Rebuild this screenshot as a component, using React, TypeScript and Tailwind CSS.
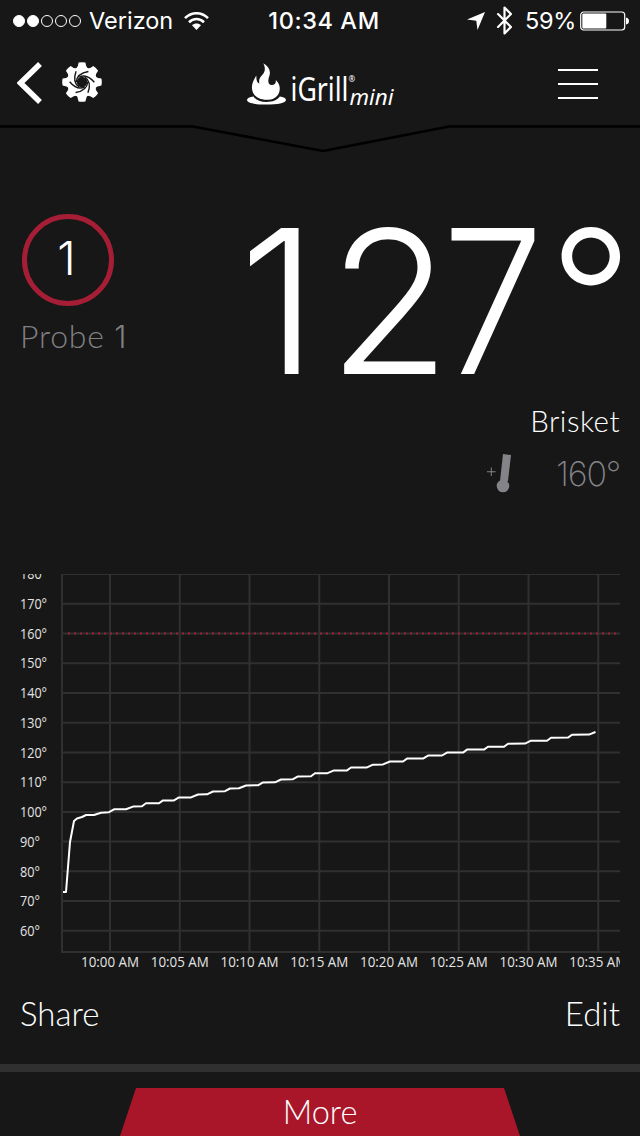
import { BluetoothIcon } from 'lucide-react';

const Y_LABELS = [180, 170, 160, 150, 140, 130, 120, 110, 100, 90, 80, 70, 60];
const X_LABELS = ['10:00', '10:05', '10:10', '10:15', '10:20', '10:25', '10:30', '10:35'];

// chart coordinates, one step per degree gained
const READINGS =
  '43,318 46,318 50,268 54,247 57,244.5 62,243 66,241 74,241 81,238.7 89,238.2 94,235.3 106,235.3 113,232.6 122,232.2 126,229.3 139,229.3 143,226.4 154,226.4 159,223.4 171,223.4 178,220.5 187,220.3 193,217.5 205,217.2 210,214.5 219,214.2 226,211.5 238,211.3 243,208.4 255,208.3 261,205.5 273,205.2 278,202.4 291,202.2 295,199.3 307,199.3 314,196.4 327,196.4 331,193.5 347,193.4 353,190.7 363,190.4 370,187.5 383,187.5 387,184.6 403,184.6 408,181.6 422,181.5 427,178.6 443,178.6 447,175.6 464,175.6 468,172.7 484,172.7 488,169.7 505,169.6 511,166.7 527,166.7 531,163.8 548,163.6 552,160.7 569,160.6 575.5,158';

const yFor = (temp: number) => 29.7 + (170 - temp) * 2.974;
const xFor = (index: number) => 90 + index * 69.75;

function StatusBar() {
  return (
    <div className="flex h-10 items-center pl-[13px] pr-[11px] pt-px font-['Inter',sans-serif] text-[23.5px] leading-none">
      <div className="flex w-[198px] items-center">
        <div className="flex gap-[2px]">
          {[true, true, false, false, false].map((filled, i) => (
            <span
              key={i}
              className={`h-3 w-3 rounded-full border ${filled ? 'border-white bg-white' : 'border-white'}`}
            />
          ))}
        </div>
        <span className="ml-[8px] w-[84px] whitespace-nowrap">Verizon</span>
        <svg className="ml-[11px] h-[18px] w-[25px] shrink-0" viewBox="0 0 25 18" fill="none" stroke="white">
          <path d="M1 6.2C7.5-.4 17.5-.4 24 6.2" strokeWidth="2.6" />
          <path d="M5 10.2C9.3 6 15.7 6 20 10.2" strokeWidth="2.6" />
          <path d="M12.5 18L8 13.3C10.6 10.9 14.4 10.9 17 13.3Z" fill="white" stroke="none" />
        </svg>
      </div>
      <span className="w-[226px] text-center font-medium tracking-[0.6px]">
        10:34 AM
      </span>
      <div className="flex flex-1 items-center justify-end">
        <svg className="h-[18px] w-[18px] shrink-0" viewBox="0 0 18 18" fill="white">
          <path d="M18 0L10.5 18L9.3 8.7L0 7.5Z" />
        </svg>
        <BluetoothIcon className="ml-[4px] h-[31px] w-[31px] shrink-0" strokeWidth={1.7} />
        <span className="ml-[5px] w-[49px] whitespace-nowrap tracking-[-0.3px]">59%</span>
        <svg className="ml-[6px] h-5 w-[49px] shrink-0" viewBox="0 0 49 20">
          <rect x="0.7" y="1" width="44" height="18" rx="3" fill="none" stroke="white" strokeWidth="1.2" />
          <rect x="2.3" y="2.6" width="24" height="14.8" rx="1" fill="white" />
          <path d="M46 6.5Q49 7 49 10T46 13.5Z" fill="white" />
        </svg>
      </div>
    </div>
  );
}

function GearIcon() {
  return (
    <svg className="-mt-[2px] h-10 w-10" viewBox="-20 -20 40 40">
      {[0, 45, 90, 135, 180, 225, 270, 315].map((angle) => (
        <path
          key={angle}
          d="M-6.5-12.5Q-3.6-15-3.4-19.4Q0-20.2 3.4-19.4Q3.6-15 6.5-12.5Z"
          fill="white"
          transform={`rotate(${angle})`}
        />
      ))}
      <circle r="10" fill="none" stroke="white" strokeWidth="9.6" />
      {[10, 70, 130, 190, 250, 310].map((angle) => (
        <path
          key={angle}
          d="M-5.6 1C-6.2-4.5-2.5-9 4.5-11.5"
          fill="none"
          stroke="#171717"
          strokeWidth="1.4"
          transform={`rotate(${angle})`}
        />
      ))}
    </svg>
  );
}

function Logo() {
  return (
    <svg className="h-[50px] w-[150px]" viewBox="0 0 150 50" fill="white">
      <path d="M16.3 .3C21.8 3.6 24 8 22.4 12.8C20.8 17.2 20.8 20.5 23.4 21.8C26.8 22.6 29.4 20.6 28.8 17C32.6 20.6 33.6 25.2 32.1 29.4C30.3 34.4 25.7 36.8 19.6 36.8C12.4 36.8 7.4 33.8 5.6 28.5C4 23.5 5.2 18.4 9.4 12.6C9.2 16.6 9.8 19.8 12.4 20.6C11.4 16.8 12.8 14.6 15.6 11.6C18.6 8 18.3 4.4 16.3 .3Z" />
      <path d="M6.5 33.6C2.5 34.2 0 35.4 0 37C0 40 8.6 41.6 19.5 41.6S39 40 39 37C39 35.4 36.5 34.2 32.8 33.6C30.5 37.2 25.8 39 19.6 39C13.5 39 8.8 37.2 6.5 33.6Z" />
      <text x="43.5" y="37.5" fontSize="32.5" fontFamily="Noto Sans, sans-serif" textLength="58" lengthAdjust="spacingAndGlyphs">iGrill</text>
      <text x="101.5" y="18.5" fontSize="8" fontFamily="Noto Sans, sans-serif">®</text>
      <text x="102.5" y="41.5" fontSize="22" fontStyle="italic" fontFamily="Noto Sans, sans-serif" textLength="44" lengthAdjust="spacingAndGlyphs">mini</text>
    </svg>
  );
}

function Header() {
  return (
    <header className="h-[112px]">
      <div className="flex h-[85px] items-start justify-between pl-[17px] pr-[42px]">
        <div className="flex w-[182px] items-center gap-5 pt-[22px]">
          <svg className="h-[42px] w-[25px]" viewBox="0 0 25 42" fill="none" stroke="white" strokeWidth="5.5">
            <path d="M23 2L3.5 21L23 40" />
          </svg>
          <GearIcon />
        </div>
        <div className="mr-auto pl-12 pt-[23px]">
          <Logo />
        </div>
        <div className="flex w-10 flex-col gap-3 pt-[29px]">
          <span className="h-[2px] bg-white" />
          <span className="h-[2px] bg-white" />
          <span className="h-[2px] bg-white" />
        </div>
      </div>
      <svg className="h-[27px] w-full" viewBox="0 0 640 27" fill="none">
        <path d="M0 1.5H193L323 26L449 1.5H640" stroke="black" strokeWidth="2.6" />
      </svg>
    </header>
  );
}

function ProbeReading() {
  return (
    <section className="flex h-[422px] justify-between pl-5 pr-5">
      <div className="pt-[62px]">
        <div className="ml-[2px] flex h-[92px] w-[92px] items-center justify-center rounded-full border-[5px] border-[#a51e36] pb-[5px] pr-[3px] font-['Inter',sans-serif] text-[47px] font-light leading-none">
          1
        </div>
        <p className="mt-[10px] whitespace-nowrap font-['Lato',sans-serif] text-[32px] font-light leading-10 tracking-[0.8px] text-[#808083]">
          Probe <span className="font-['Inter',sans-serif] text-[31px]">1</span>
        </p>
      </div>
      <div className="flex flex-col items-end">
        <div className="flex h-[249px] items-start pt-[49px] font-['Inter',sans-serif] text-[200px] font-light leading-[200px]">
          <span className="w-[89px]">1</span>
          <span className="w-[114px]">2</span>
          <span className="w-[107px] origin-left scale-x-[0.91]">7</span>
          <span className="-mt-[6px] w-[71px] text-[184px]">°</span>
        </div>
        <p className="font-['Lato',sans-serif] text-[29.5px] leading-10 font-light tracking-[0.5px]">Brisket</p>
        <div className="mt-[13px] flex h-10 items-center text-[#848488]">
          <svg className="mr-[45px] h-10 w-6" viewBox="0 0 24 40" fill="currentColor">
            <path d="M0 17.2H3.8V13.4H4.8V17.2H8.6V18.2H4.8V22H3.8V18.2H0Z" />
            <path d="M16 0L24 1L21 27H13Z" />
            <circle cx="16" cy="32" r="6.3" />
          </svg>
          <span className="font-['Inter',sans-serif] text-[34px] font-extralight leading-none tracking-[-1.2px]">160°</span>
        </div>
      </div>
    </section>
  );
}

function TemperatureChart() {
  return (
    <svg className="mx-5 block h-[398px] w-[600px] overflow-hidden" viewBox="0 0 600 398">
      <g stroke="#303030" strokeWidth="2">
        {Y_LABELS.map((temp) => (
          <line key={temp} x1="42" x2="600" y1={yFor(temp)} y2={yFor(temp)} />
        ))}
        {X_LABELS.map((time, i) => (
          <line key={time} x1={xFor(i)} x2={xFor(i)} y1="0" y2="378" />
        ))}
        <path d="M42 0V378H600" fill="none" />
      </g>
      <line x1="48" x2="600" y1="59.5" y2="59.5" stroke="#a51e36" strokeWidth="2" strokeDasharray="2 4" />
      <g fill="#e4e4e4" fontFamily="Open Sans, sans-serif" fontSize="14">
        {Y_LABELS.map((temp) => (
          <text
            key={temp}
            x="0"
            y={yFor(temp) + 5.2}
            textLength={temp >= 100 ? 27 : 20}
            lengthAdjust="spacingAndGlyphs"
          >
            {temp}°
          </text>
        ))}
        {X_LABELS.map((time, i) => (
          <text key={time} x={xFor(i) - 29} y="393" textLength="58" lengthAdjust="spacingAndGlyphs">
            {time} AM
          </text>
        ))}
      </g>
      <polyline points={READINGS} fill="none" stroke="white" strokeWidth="2" strokeLinejoin="round" />
    </svg>
  );
}

export default function App() {
  return (
    <main className="flex h-[1136px] w-[640px] flex-col overflow-hidden bg-[#171717] text-white">
      <StatusBar />
      <Header />
      <ProbeReading />
      <TemperatureChart />
      <div className="flex h-[92px] items-center justify-between px-5 pb-2 font-['Lato',sans-serif] text-[33px] font-light">
        <button>Share</button>
        <button>Edit</button>
      </div>
      <footer className="flex h-[72px] justify-center border-t-8 border-[#303030] pt-4">
        <button className="h-12 w-[400px] bg-[#a91629] font-['Lato',sans-serif] text-[32.5px] font-light leading-[48px] [clip-path:polygon(16px_0,384px_0,100%_100%,0_100%)]">
          More
        </button>
      </footer>
    </main>
  );
}
